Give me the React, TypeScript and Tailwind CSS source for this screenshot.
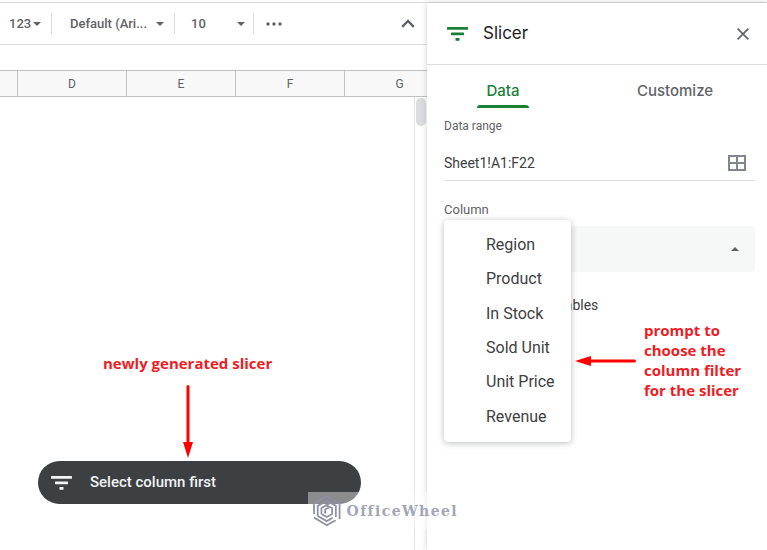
import type { ReactNode } from "react";

const columnOptions = ["Region", "Product", "In Stock", "Sold Unit", "Unit Price", "Revenue"];

const FilterIcon = ({ className }: { className: string }) => (
  <svg viewBox="0 0 21 14" className={className} fill="currentColor" aria-hidden="true">
    <rect x="0" y="0" width="21" height="2.8" rx="0.5" />
    <rect x="4" y="5.5" width="13" height="2.8" rx="0.5" />
    <rect x="8.5" y="11" width="4" height="2.8" rx="0.5" />
  </svg>
);

const Caret = ({ className = "" }: { className?: string }) => (
  <svg viewBox="0 0 8 4" className={`h-1 w-2 shrink-0 ${className}`} fill="currentColor" aria-hidden="true">
    <path d="M0 0h8L4 4z" />
  </svg>
);

const Divider = () => <span className="h-[21px] w-px shrink-0 bg-[#dadce0]" />;

const Note = ({ children, className }: { children: ReactNode; className: string }) => (
  <p className={`absolute font-['Open_Sans',sans-serif] text-[15px] leading-5 font-bold text-[#ee1c25] ${className}`}>
    {children}
  </p>
);

const Toolbar = () => (
  <div className="flex h-[42px] shrink-0 items-center border-b border-[#dadce0] pl-[9px] text-[13px] font-medium text-[#5f6368]">
    <button className="mr-[10px] flex w-8 items-center justify-between" aria-label="More formats">
      123
      <Caret />
    </button>
    <Divider />
    <div className="mx-[10px] flex w-[102px] items-center pl-2">
      <select aria-label="Font" className="min-w-0 flex-1 appearance-none bg-transparent">
        <option>Default (Ari...</option>
      </select>
      <Caret />
    </div>
    <Divider />
    <div className="mx-2 flex w-[62px] items-center pl-2">
      <select aria-label="Font size" className="min-w-0 flex-1 appearance-none bg-transparent">
        <option>10</option>
      </select>
      <Caret />
    </div>
    <Divider />
    <button className="ml-3" aria-label="More">
      <svg viewBox="0 0 16 4" className="h-1 w-4" fill="currentColor">
        <circle cx="2" cy="2" r="1.7" />
        <circle cx="8" cy="2" r="1.7" />
        <circle cx="14" cy="2" r="1.7" />
      </svg>
    </button>
    <button className="mr-3 ml-auto" aria-label="Hide the menus">
      <svg viewBox="0 0 14 9" className="h-[9px] w-[14px]" fill="none" stroke="currentColor" strokeWidth="2.4">
        <path d="M1.2 7.8 7 2l5.8 5.8" />
      </svg>
    </button>
  </div>
);

const Sheet = () => (
  <div className="relative flex flex-1 flex-col">
    <div className="mt-[25px] flex h-[27px] shrink-0 overflow-hidden border-y border-[#c0c0c0] bg-[#f8f8f8] text-xs text-[#5f6368]">
      <div className="w-[18px] shrink-0 border-r border-[#c0c0c0]" />
      {["D", "E", "F", "G"].map((name) => (
        <div
          key={name}
          className="flex w-[109px] shrink-0 items-center justify-center border-r border-[#c0c0c0] last:border-r-0"
        >
          {name}
        </div>
      ))}
    </div>
    <div className="flex flex-1 justify-end">
      <div className="w-[13px] border-l border-[#e2e3e3] px-px pt-px">
        <div className="h-7 w-[10px] rounded-full bg-[#dadce0]" />
      </div>
    </div>

    <Note className="top-[308px] left-[103px] whitespace-nowrap">newly generated slicer</Note>
    <svg viewBox="0 0 10 73" className="absolute top-[340px] left-[183px] h-[73px] w-[10px]" fill="#f00" aria-hidden="true">
      <path d="M3.5 1.5a1.5 1.5 0 0 1 3 0V57H10L5 73 0 57h3.5z" />
    </svg>

    <button className="absolute top-[416px] left-[38px] flex h-[43px] w-[323px] items-center gap-[18px] rounded-full bg-[#3c4043] pl-[13px] text-[15px] font-medium text-[#f1f3f4]">
      <FilterIcon className="h-[14px] w-[21px]" />
      Select column first
    </button>
  </div>
);

const SlicerPanel = () => (
  <aside className="relative w-[340px] shrink-0 bg-white shadow-[0_0_6px_rgba(60,64,67,0.25)]">
    <header className="flex h-[62px] items-center border-b border-[#dadce0] pr-[18px] pl-5">
      <FilterIcon className="h-[14px] w-[21px] text-[#188038]" />
      <h1 className="ml-[15px] font-[Inter,sans-serif] text-[17px] text-[#202124]">Slicer</h1>
      <button className="ml-auto text-[#5f6368]" aria-label="Close">
        <svg viewBox="0 0 12 12" className="h-3 w-3" fill="none" stroke="currentColor" strokeWidth="1.6">
          <path d="m.6.6 10.8 10.8M11.4.6.6 11.4" />
        </svg>
      </button>
    </header>

    <div role="tablist" className="grid h-[43px] grid-cols-2 gap-5 pr-4 font-[Inter,sans-serif] text-[15px] font-medium">
      <button role="tab" aria-selected="true" className="relative flex items-center justify-center pt-[10px] text-[#188038]">
        Data
        <span className="absolute bottom-0 h-[3px] w-[52px] rounded-t-sm bg-[#188038]" />
      </button>
      <button role="tab" aria-selected="false" className="flex items-center justify-center pt-[10px] text-[#5f6368]">
        Customize
      </button>
    </div>

    <div className="pr-3 pl-[17px] text-[#3c4043]">
      <label htmlFor="range" className="mt-[10px] block text-xs leading-4 text-[#5f6368]">
        Data range
      </label>
      <div className="flex h-[47px] items-center border-b border-[#dadce0] pt-3 pr-[9px]">
        <input id="range" defaultValue="Sheet1!A1:F22" className="min-w-0 flex-1 text-sm outline-none" />
        <button aria-label="Select data range">
          <svg viewBox="0 0 18 16" className="h-4 w-[18px]" fill="none" stroke="#80868b" strokeWidth="2">
            <path d="M1 1h16v14H1zM9 1v14M1 8h16" />
          </svg>
        </button>
      </div>

      <label htmlFor="column" className="mt-[21px] block text-[13px] leading-4 text-[#5f6368]">
        Column
      </label>
      <div className="mt-2 flex h-[46px] items-center rounded bg-[#f6f8f7] pr-4">
        <select id="column" className="min-w-0 flex-1 appearance-none bg-transparent" defaultValue="">
          <option value="" />
          {columnOptions.map((name) => (
            <option key={name}>{name}</option>
          ))}
        </select>
        <Caret className="rotate-180 text-[#5f6368]" />
      </div>
      <label className="mt-[23px] flex items-center gap-[10px] text-sm leading-5">
        <input type="checkbox" className="h-[18px] w-[18px]" />
        Apply to pivot tables
      </label>
    </div>

    <ul
      role="listbox"
      aria-label="Column"
      className="absolute top-[217px] left-[17px] flex h-[222px] w-[127px] flex-col rounded bg-white py-2 text-base text-[#3c4043] shadow-[0_1px_6px_rgba(60,64,67,0.35)]"
    >
      {columnOptions.map((name) => (
        <li key={name} role="option" aria-selected="false" className="flex flex-1 items-center pl-[42px]">
          {name}
        </li>
      ))}
    </ul>

    <svg viewBox="0 0 61 10" className="absolute top-[353px] left-[148px] h-[10px] w-[61px]" fill="#f00" aria-hidden="true">
      <path d="M59.5 3.5a1.5 1.5 0 0 1 0 3H16V10L0 5l16-5v3.5z" />
    </svg>
    <Note className="top-[317px] left-[217px] w-[105px]">prompt to choose the column filter for the slicer</Note>
  </aside>
);

const Watermark = () => (
  <div className="absolute top-[492px] left-[308px] flex h-[38px] w-[150px] items-center bg-white/40 pl-[5px]">
    <svg viewBox="0 0 28 32" className="h-8 w-7" fill="none" stroke="#8d91a3" strokeWidth="1.8" aria-hidden="true">
      <path d="M1 19V8.5L14 1l4 2.300M20.500 4.800 27 8.500V24M1 22.500 14 30.500l9-5.200" />
      <path d="M4.800 21V10.800L14 5.500l9.200 5.300V22M4.800 21l9.200 5.300 6-3.500" />
      <path d="M8.600 19v-6L17 8M8.600 19l5.400 3 5.400-3v-6L14 10.800M12.300 18.500v-4l3.700-2" />
    </svg>
    <span className="ml-[6px] font-['DejaVu_Serif',serif] text-sm font-bold tracking-widest text-[#a3a6b5]">
      OfficeWheel
    </span>
  </div>
);

const App = () => {
  return (
    <div className="relative flex min-h-screen flex-col overflow-hidden bg-white pt-[2px] font-[Roboto,sans-serif]">
      <div className="flex flex-1 border-t border-[#dadce0]">
        <main className="flex min-w-0 flex-1 flex-col">
          <Toolbar />
          <Sheet />
        </main>
        <SlicerPanel />
      </div>
      <Watermark />
    </div>
  );
};

export default App;
